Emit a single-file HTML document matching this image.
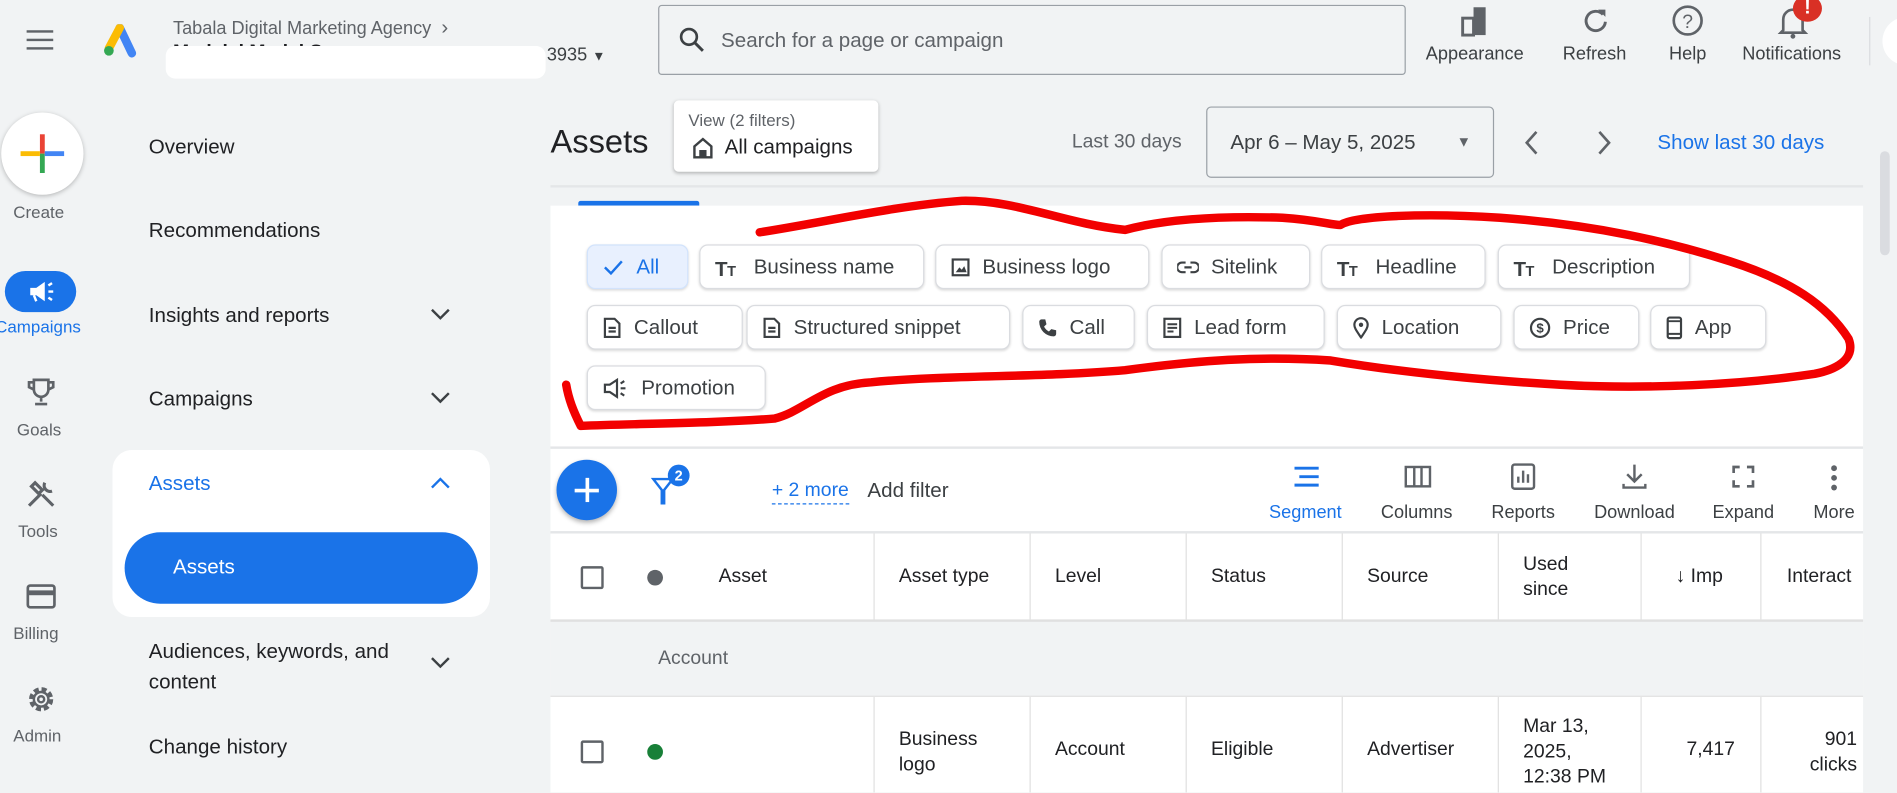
<!DOCTYPE html>
<html><head><meta charset="utf-8"><style>
html,body{margin:0;padding:0;width:1897px;height:793px;overflow:hidden;background:#f1f3f4}
#w{position:absolute;left:0;top:0;width:1568px;height:655px;transform:scale(1.2098);transform-origin:0 0;font-family:"Liberation Sans",sans-serif;color:#202124;background:#f1f3f4}
.a{position:absolute}
.t{position:absolute;white-space:nowrap}
.nav{font-size:17px;left:123px;color:#202124}
.chip{position:absolute;height:37px;background:#fff;border:1px solid #dadce0;border-radius:7px;box-shadow:0 1px 2px rgba(0,0,0,.15);font-size:17px;color:#3c4043;display:flex;align-items:center;box-sizing:border-box;padding-left:12px;white-space:nowrap}
.chip svg{margin-right:10px;flex:none}
.tl{position:absolute;font-size:15px;color:#3c4043;text-align:center;width:90px}
.th{position:absolute;font-size:16px;color:#202124;white-space:nowrap}
.vl{position:absolute;width:1px;background:#e0e0e0}
.cb{position:absolute;width:15px;height:15px;border:2px solid #5f6368;border-radius:2px}
</style></head><body><div id="w">
<!-- top bar -->
<div class="a" style="left:22px;top:25px;width:22px;height:2px;background:#5f6368;box-shadow:0 7px 0 #5f6368,0 14px 0 #5f6368"></div>
<svg class="a" style="left:84px;top:20px" width="30" height="28" viewBox="0 0 30 28"><path d="M15 3 L25 24" stroke="#4285f4" stroke-width="7" stroke-linecap="round"/><path d="M15 3 L6 20" stroke="#fbbc04" stroke-width="7" stroke-linecap="round"/><circle cx="6" cy="22" r="4" fill="#34a853"/></svg>
<div class="t" style="left:143px;top:13px;font-size:15px;color:#5f6368">Tabala Digital Marketing Agency &nbsp;<span style="font-size:17px">›</span></div>
<div class="t" style="left:143px;top:35px;font-size:16px;color:#202124;font-weight:bold">M&nbsp; d&nbsp; l&nbsp; l M&nbsp; d&nbsp; l S</div>
<div class="a" style="left:137px;top:38px;width:314px;height:27px;background:#fff;border-radius:8px"></div>
<div class="t" style="left:452px;top:37px;font-size:15px;color:#3c4043">3935 <span style="font-size:11px">▼</span></div>
<div class="a" style="left:544px;top:4px;width:618px;height:58px;border:1px solid #9aa0a6;border-radius:3px;box-sizing:border-box"></div>
<svg class="a" style="left:561px;top:22px" width="22" height="22" viewBox="0 0 22 22"><circle cx="8.5" cy="8.5" r="6.5" stroke="#3c4043" stroke-width="2.2" fill="none"/><path d="M13.5 13.5 L20 20" stroke="#3c4043" stroke-width="2.4"/></svg>
<div class="t" style="left:596px;top:24px;font-size:17px;color:#5f6368">Search for a page or campaign</div>
<svg class="a" style="left:1206px;top:4px" width="26" height="28" viewBox="0 0 26 28"><rect x="3" y="11" width="9" height="14" fill="none" stroke="#5f6368" stroke-width="2.4"/><rect x="12" y="2" width="10" height="23" fill="#5f6368"/></svg>
<svg class="a" style="left:1307px;top:5px" width="24" height="24" viewBox="0 0 24 24"><path d="M18 7 A8 8 0 1 0 20 13" stroke="#5f6368" stroke-width="2.4" fill="none"/><path d="M14 3 L20 3 L20 9 Z" fill="#5f6368"/></svg>
<svg class="a" style="left:1381px;top:3px" width="28" height="28" viewBox="0 0 28 28"><circle cx="14" cy="14" r="11.5" stroke="#5f6368" stroke-width="2.2" fill="none"/><text x="14" y="20" font-size="16" text-anchor="middle" fill="#5f6368" font-family="Liberation Sans">?</text></svg>
<svg class="a" style="left:1468px;top:3px" width="28" height="30" viewBox="0 0 28 30"><path d="M6 22 L6 13 A8 8 0 0 1 22 13 L22 22 L24 24 L4 24 Z" stroke="#5f6368" stroke-width="2.2" fill="none"/><circle cx="14" cy="27" r="2" fill="#5f6368"/></svg>
<div class="a" style="left:1482px;top:-4px;width:24px;height:22px;border-radius:50%;background:#d93025;color:#fff;font-size:16px;font-weight:bold;text-align:center;line-height:22px">!</div>
<div class="tl" style="left:1174px;top:36px">Appearance</div>
<div class="tl" style="left:1273px;top:36px">Refresh</div>
<div class="tl" style="left:1350px;top:36px">Help</div>
<div class="tl" style="left:1436px;top:36px">Notifications</div>
<div class="a" style="left:1545px;top:14px;width:1px;height:40px;background:#dadce0"></div>
<div class="a" style="left:1556px;top:14px;width:40px;height:40px;border-radius:50%;background:#fff"></div>
<!-- left rail -->
<div class="a" style="left:1px;top:93px;width:68px;height:68px;border-radius:50%;background:#fff;box-shadow:0 1px 4px rgba(0,0,0,.25)"></div>
<div class="a" style="left:33px;top:111px;width:4px;height:16px;background:#ea4335"></div>
<div class="a" style="left:33px;top:127px;width:4px;height:16px;background:#34a853"></div>
<div class="a" style="left:17px;top:125px;width:16px;height:4px;background:#fbbc04"></div>
<div class="a" style="left:37px;top:125px;width:16px;height:4px;background:#4285f4"></div>
<div class="t" style="left:11px;top:167px;font-size:14px;color:#5f6368">Create</div>
<div class="a" style="left:4px;top:224px;width:59px;height:34px;border-radius:17px;background:#1a73e8"></div>
<svg class="a" style="left:22px;top:230px" width="24" height="22" viewBox="0 0 24 22"><path d="M3 8 L8 8 L15 3 L15 19 L8 14 L3 14 Z" fill="#fff"/><path d="M6 14 L8 19" stroke="#fff" stroke-width="2"/><path d="M18 11 L22 11 M18 6 L21 4 M18 16 L21 18" stroke="#fff" stroke-width="2"/></svg>
<div class="t" style="left:-4px;top:262px;font-size:14px;color:#1a73e8">Campaigns</div>
<svg class="a" style="left:22px;top:311px" width="24" height="26" viewBox="0 0 24 26"><path d="M6 3 L18 3 L18 11 A6 6 0 0 1 6 11 Z M6 5 L2 5 L2 9 L6 11 M18 5 L22 5 L22 9 L18 11 M12 17 L12 21 M7 23 L17 23" stroke="#5f6368" stroke-width="2.2" fill="none"/></svg>
<div class="t" style="left:14px;top:347px;font-size:14px;color:#5f6368">Goals</div>
<svg class="a" style="left:21px;top:396px" width="26" height="26" viewBox="0 0 26 26"><path d="M3 22 L13 12 M8 3 L14 9 L11 12 L5 6 Z M23 22 L14 13 M16 3 A5 5 0 0 0 22 10" stroke="#5f6368" stroke-width="2.6" fill="none"/></svg>
<div class="t" style="left:15px;top:431px;font-size:14px;color:#5f6368">Tools</div>
<svg class="a" style="left:21px;top:482px" width="26" height="22" viewBox="0 0 26 22"><rect x="2" y="2" width="22" height="18" rx="2" stroke="#5f6368" stroke-width="2.2" fill="none"/><rect x="2" y="6" width="22" height="4" fill="#5f6368"/></svg>
<div class="t" style="left:11px;top:515px;font-size:14px;color:#5f6368">Billing</div>
<svg class="a" style="left:21px;top:565px" width="26" height="26" viewBox="0 0 26 26"><circle cx="13" cy="13" r="8" stroke="#5f6368" stroke-width="4" stroke-dasharray="4 2.3" fill="none"/><circle cx="13" cy="13" r="6" stroke="#5f6368" stroke-width="2" fill="none"/><circle cx="13" cy="13" r="2.5" stroke="#5f6368" stroke-width="2" fill="none"/></svg>
<div class="t" style="left:11px;top:600px;font-size:14px;color:#5f6368">Admin</div>
<!-- nav -->
<div class="t nav" style="top:112px">Overview</div>
<div class="t nav" style="top:181px">Recommendations</div>
<div class="t nav" style="top:251px">Insights and reports</div>
<div class="t nav" style="top:320px">Campaigns</div>
<div class="a" style="left:93px;top:372px;width:312px;height:138px;background:#fff;border-radius:16px"></div>
<div class="t nav" style="top:390px;color:#1a73e8">Assets</div>
<div class="a" style="left:103px;top:440px;width:292px;height:59px;border-radius:30px;background:#1a73e8"></div>
<div class="t nav" style="left:143px;top:459px;color:#fff">Assets</div>
<div class="t nav" style="top:526px;line-height:25px">Audiences, keywords, and<br>content</div>
<div class="t nav" style="top:608px">Change history</div>
<svg class="a" style="left:355px;top:254px" width="18" height="12"><path d="M2 2 L9 9 L16 2" stroke="#3c4043" stroke-width="2" fill="none"/></svg>
<svg class="a" style="left:355px;top:323px" width="18" height="12"><path d="M2 2 L9 9 L16 2" stroke="#3c4043" stroke-width="2" fill="none"/></svg>
<svg class="a" style="left:355px;top:393px" width="18" height="12"><path d="M2 10 L9 3 L16 10" stroke="#1a73e8" stroke-width="2" fill="none"/></svg>
<svg class="a" style="left:355px;top:542px" width="18" height="12"><path d="M2 2 L9 9 L16 2" stroke="#3c4043" stroke-width="2" fill="none"/></svg>
<!-- main header -->
<div class="t" style="left:455px;top:102px;font-size:27px;color:#202124">Assets</div>
<div class="a" style="left:557px;top:83px;width:169px;height:59px;background:#fff;border-radius:4px;box-shadow:0 1px 3px rgba(0,0,0,.25)"></div>
<div class="t" style="left:569px;top:91px;font-size:14px;color:#5f6368">View (2 filters)</div>
<svg class="a" style="left:571px;top:112px" width="20" height="20"><path d="M3 9 L10 3 L17 9 L17 18 L3 18 Z" stroke="#3c4043" stroke-width="2" fill="none"/><rect x="7" y="12" width="6" height="6" fill="#3c4043"/></svg>
<div class="t" style="left:599px;top:112px;font-size:17px;color:#202124">All campaigns</div>
<div class="t" style="left:886px;top:109px;font-size:16px;color:#5f6368">Last 30 days</div>
<div class="a" style="left:997px;top:88px;width:238px;height:59px;border:1px solid #9aa0a6;border-radius:4px;box-sizing:border-box"></div>
<div class="t" style="left:1017px;top:108px;font-size:17px;color:#3c4043">Apr 6 – May 5, 2025</div>
<div class="t" style="left:1204px;top:110px;font-size:12px;color:#5f6368">▼</div>
<svg class="a" style="left:1258px;top:106px" width="16" height="24"><path d="M12 3 L4 12 L12 21" stroke="#5f6368" stroke-width="2.2" fill="none"/></svg>
<svg class="a" style="left:1318px;top:106px" width="16" height="24"><path d="M4 3 L12 12 L4 21" stroke="#5f6368" stroke-width="2.2" fill="none"/></svg>
<div class="t" style="left:1370px;top:108px;font-size:17px;color:#1a73e8">Show last 30 days</div>
<div class="a" style="left:455px;top:153px;width:1085px;height:2px;background:#e4e6e8"></div>
<div class="a" style="left:478px;top:166px;width:100px;height:4px;background:#1a73e8;border-radius:2px 2px 0 0"></div>
<!-- white panel -->
<div class="a" style="left:455px;top:170px;width:1085px;height:485px;background:#fff"></div>
<div class="chip" style="left:485px;top:202px;width:84px;background:#e8f0fe;color:#1a73e8;border-color:#d2e3fc"><svg width="18" height="14"><path d="M2 7 L7 12 L16 2" stroke="#1a73e8" stroke-width="2" fill="none"/></svg>All</div>
<div class="chip" style="left:578px;top:202px;width:186px"><svg width="22" height="16"><text x="0" y="15" font-size="17" font-weight="bold" fill="#3c4043" font-family="Liberation Sans">T</text><text x="10" y="15" font-size="12" font-weight="bold" fill="#3c4043" font-family="Liberation Sans">T</text></svg>Business name</div>
<div class="chip" style="left:773px;top:202px;width:177px"><svg width="16" height="16"><rect x="1.5" y="1.5" width="13" height="13" stroke="#3c4043" stroke-width="1.8" fill="none"/><path d="M4 12 L7 8 L9 10 L11 7 L13 12 Z" fill="#3c4043"/></svg>Business logo</div>
<div class="chip" style="left:960px;top:202px;width:123px"><svg width="18" height="12"><path d="M7 2 L4 2 A4 4 0 0 0 4 10 L7 10 M11 2 L14 2 A4 4 0 0 1 14 10 L11 10 M6 6 L12 6" stroke="#3c4043" stroke-width="1.8" fill="none"/></svg>Sitelink</div>
<div class="chip" style="left:1092px;top:202px;width:136px"><svg width="22" height="16"><text x="0" y="15" font-size="17" font-weight="bold" fill="#3c4043" font-family="Liberation Sans">T</text><text x="10" y="15" font-size="12" font-weight="bold" fill="#3c4043" font-family="Liberation Sans">T</text></svg>Headline</div>
<div class="chip" style="left:1238px;top:202px;width:159px"><svg width="22" height="16"><text x="0" y="15" font-size="17" font-weight="bold" fill="#3c4043" font-family="Liberation Sans">T</text><text x="10" y="15" font-size="12" font-weight="bold" fill="#3c4043" font-family="Liberation Sans">T</text></svg>Description</div>
<div class="chip" style="left:485px;top:252px;width:129px"><svg width="16" height="18"><path d="M2 1.5 L10 1.5 L14 5.5 L14 16.5 L2 16.5 Z M5 9 L11 9 M5 12 L11 12" stroke="#3c4043" stroke-width="1.8" fill="none"/></svg>Callout</div>
<div class="chip" style="left:617px;top:252px;width:218px"><svg width="16" height="18"><path d="M2 1.5 L10 1.5 L14 5.5 L14 16.5 L2 16.5 Z M5 9 L11 9 M5 12 L11 12" stroke="#3c4043" stroke-width="1.8" fill="none"/></svg>Structured snippet</div>
<div class="chip" style="left:845px;top:252px;width:93px"><svg width="16" height="16"><path d="M3 1 L6 1 L7 5 L5 7 A9 9 0 0 0 9 11 L11 9 L15 10 L15 13 A2 2 0 0 1 13 15 A12 12 0 0 1 1 3 A2 2 0 0 1 3 1 Z" fill="#3c4043"/></svg>Call</div>
<div class="chip" style="left:948px;top:252px;width:147px"><svg width="16" height="18"><rect x="1.5" y="1.5" width="13" height="15" stroke="#3c4043" stroke-width="1.8" fill="none"/><path d="M4 6 L12 6 M4 9 L12 9 M4 12 L9 12" stroke="#3c4043" stroke-width="1.6"/></svg>Lead form</div>
<div class="chip" style="left:1105px;top:252px;width:136px"><svg width="14" height="18"><path d="M7 17 C3 11 1.5 9 1.5 6.5 A5.5 5.5 0 0 1 12.5 6.5 C12.5 9 11 11 7 17 Z" stroke="#3c4043" stroke-width="1.8" fill="none"/><circle cx="7" cy="6.5" r="1.8" fill="#3c4043"/></svg>Location</div>
<div class="chip" style="left:1251px;top:252px;width:104px"><svg width="18" height="18"><circle cx="9" cy="9" r="7.5" stroke="#3c4043" stroke-width="1.8" fill="none"/><text x="9" y="13" font-size="11" text-anchor="middle" fill="#3c4043" font-family="Liberation Sans" font-weight="bold">$</text></svg>Price</div>
<div class="chip" style="left:1364px;top:252px;width:96px"><svg width="14" height="20"><rect x="1.5" y="1.5" width="11" height="17" rx="1.5" stroke="#3c4043" stroke-width="1.8" fill="none"/><path d="M1.5 4.5 L12.5 4.5 M1.5 15 L12.5 15" stroke="#3c4043" stroke-width="1.6"/></svg>App</div>
<div class="chip" style="left:485px;top:302px;width:148px"><svg width="22" height="18"><path d="M2 6 L6 6 L12 2 L12 16 L6 12 L2 12 Z" stroke="#3c4043" stroke-width="1.8" fill="none"/><path d="M15 9 L19 9 M15 5 L18 3 M15 13 L18 15" stroke="#3c4043" stroke-width="1.8"/></svg>Promotion</div>
<div class="a" style="left:455px;top:369px;width:1085px;height:2px;background:#e4e6e8"></div>
<!-- toolbar -->
<div class="a" style="left:460px;top:380px;width:50px;height:50px;border-radius:50%;background:#1a73e8;box-shadow:0 2px 4px rgba(0,0,0,.3)"></div>
<div class="a" style="left:484px;top:395px;width:2.5px;height:20px;background:#fff"></div>
<div class="a" style="left:475px;top:404px;width:20px;height:2.5px;background:#fff"></div>
<svg class="a" style="left:538px;top:392px" width="20" height="26"><path d="M2 4 L18 4 L11 13 L11 24 L9 24 L9 13 Z" stroke="#1a73e8" stroke-width="2" fill="none"/></svg>
<div class="a" style="left:552px;top:384px;width:18px;height:18px;border-radius:50%;background:#1a73e8;color:#fff;font-size:12px;font-weight:bold;text-align:center;line-height:18px">2</div>
<div class="t" style="left:638px;top:397px;font-size:16px;color:#1a73e8;border-bottom:1.5px dashed #1a73e8;padding-bottom:1px">+ 2 more</div>
<div class="t" style="left:717px;top:396px;font-size:17px;color:#3c4043">Add filter</div>
<svg class="a" style="left:1068px;top:384px" width="24" height="20"><path d="M2 3 L22 3 M6 10 L22 10 M2 17 L22 17" stroke="#1a73e8" stroke-width="2.4"/></svg>
<svg class="a" style="left:1160px;top:384px" width="24" height="20"><rect x="2" y="2" width="20" height="16" stroke="#5f6368" stroke-width="2" fill="none"/><path d="M9 2 L9 18 M15 2 L15 18" stroke="#5f6368" stroke-width="2"/></svg>
<svg class="a" style="left:1248px;top:382px" width="22" height="24"><rect x="2" y="2" width="18" height="20" rx="2" stroke="#5f6368" stroke-width="2" fill="none"/><path d="M7 17 L7 12 M11 17 L11 7 M15 17 L15 10" stroke="#5f6368" stroke-width="2"/></svg>
<svg class="a" style="left:1340px;top:382px" width="22" height="24"><path d="M11 2 L11 15 M5 10 L11 16 L17 10 M2 18 L2 21 L20 21 L20 18" stroke="#5f6368" stroke-width="2" fill="none"/></svg>
<svg class="a" style="left:1431px;top:384px" width="20" height="20"><path d="M2 7 L2 2 L7 2 M13 2 L18 2 L18 7 M18 13 L18 18 L13 18 M7 18 L2 18 L2 13" stroke="#5f6368" stroke-width="2.2" fill="none"/></svg>
<svg class="a" style="left:1510px;top:383px" width="12" height="24"><circle cx="6" cy="4" r="2.4" fill="#5f6368"/><circle cx="6" cy="12" r="2.4" fill="#5f6368"/><circle cx="6" cy="20" r="2.4" fill="#5f6368"/></svg>
<div class="tl" style="left:1034px;top:415px;color:#1a73e8">Segment</div>
<div class="tl" style="left:1126px;top:415px">Columns</div>
<div class="tl" style="left:1214px;top:415px">Reports</div>
<div class="tl" style="left:1306px;top:415px">Download</div>
<div class="tl" style="left:1396px;top:415px">Expand</div>
<div class="tl" style="left:1471px;top:415px">More</div>
<div class="a" style="left:455px;top:439px;width:1085px;height:2px;background:#e4e6e8"></div>
<!-- table header -->
<div class="vl" style="left:722px;top:441px;height:72px"></div>
<div class="vl" style="left:851px;top:441px;height:72px"></div>
<div class="vl" style="left:980px;top:441px;height:72px"></div>
<div class="vl" style="left:1109px;top:441px;height:72px"></div>
<div class="vl" style="left:1238px;top:441px;height:72px"></div>
<div class="vl" style="left:1356px;top:441px;height:72px"></div>
<div class="vl" style="left:1455px;top:441px;height:72px"></div>
<div class="cb" style="left:480px;top:468px"></div>
<div class="a" style="left:535px;top:471px;width:13px;height:13px;border-radius:50%;background:#5f6368"></div>
<div class="th" style="left:594px;top:468px">Asset</div>
<div class="th" style="left:743px;top:468px">Asset type</div>
<div class="th" style="left:872px;top:468px">Level</div>
<div class="th" style="left:1001px;top:468px">Status</div>
<div class="th" style="left:1130px;top:468px">Source</div>
<div class="th" style="left:1259px;top:456px;line-height:21px">Used<br>since</div>
<div class="th" style="left:1385px;top:468px">↓ Imp</div>
<div class="th" style="left:1477px;top:468px">Interact</div>
<div class="a" style="left:455px;top:512px;width:1085px;height:63px;background:#f1f3f4;border-top:2px solid #e0e0e0;box-sizing:border-box"></div>
<div class="t" style="left:544px;top:536px;font-size:16px;color:#5f6368">Account</div>
<div class="a" style="left:455px;top:575px;width:1085px;height:1px;background:#e0e0e0"></div>
<div class="vl" style="left:722px;top:576px;height:79px"></div>
<div class="vl" style="left:851px;top:576px;height:79px"></div>
<div class="vl" style="left:980px;top:576px;height:79px"></div>
<div class="vl" style="left:1109px;top:576px;height:79px"></div>
<div class="vl" style="left:1238px;top:576px;height:79px"></div>
<div class="vl" style="left:1356px;top:576px;height:79px"></div>
<div class="vl" style="left:1455px;top:576px;height:79px"></div>
<div class="cb" style="left:480px;top:612px"></div>
<div class="a" style="left:535px;top:615px;width:13px;height:13px;border-radius:50%;background:#188038"></div>
<div class="th" style="left:743px;top:601px;line-height:21px">Business<br>logo</div>
<div class="th" style="left:872px;top:611px">Account</div>
<div class="th" style="left:1001px;top:611px">Eligible</div>
<div class="th" style="left:1130px;top:611px">Advertiser</div>
<div class="th" style="left:1259px;top:590px;line-height:21px">Mar 13,<br>2025,<br>12:38 PM</div>
<div class="th" style="left:1394px;top:611px">7,417</div>
<div class="th" style="left:1477px;top:601px;line-height:21px;text-align:right;width:58px">901<br>clicks</div>
<!-- scrollbar -->
<div class="a" style="left:1554px;top:125px;width:8px;height:86px;background:#dadce0;border-radius:4px"></div>
<!-- red annotation -->
<svg class="a" style="left:0;top:0" width="1568" height="655" viewBox="0 0 1568 655"><path d="M628 192 C680 184 740 170 795 166 C840 165 880 185 930 190 C960 182 1000 178 1060 180 C1090 182 1100 186 1108 186 C1120 178 1180 176 1240 180 C1320 186 1380 200 1430 216 C1480 232 1510 252 1528 280 C1535 298 1515 306 1500 309 C1440 318 1360 322 1290 318 C1220 314 1160 308 1100 298 C1040 294 990 298 930 306 C860 312 780 310 720 316 C680 318 665 340 640 346 C590 350 530 350 480 352 C474 340 470 330 468 318" stroke="#f20000" stroke-width="7" fill="none" stroke-linecap="round" stroke-linejoin="round"/></svg>
</div></body></html>
